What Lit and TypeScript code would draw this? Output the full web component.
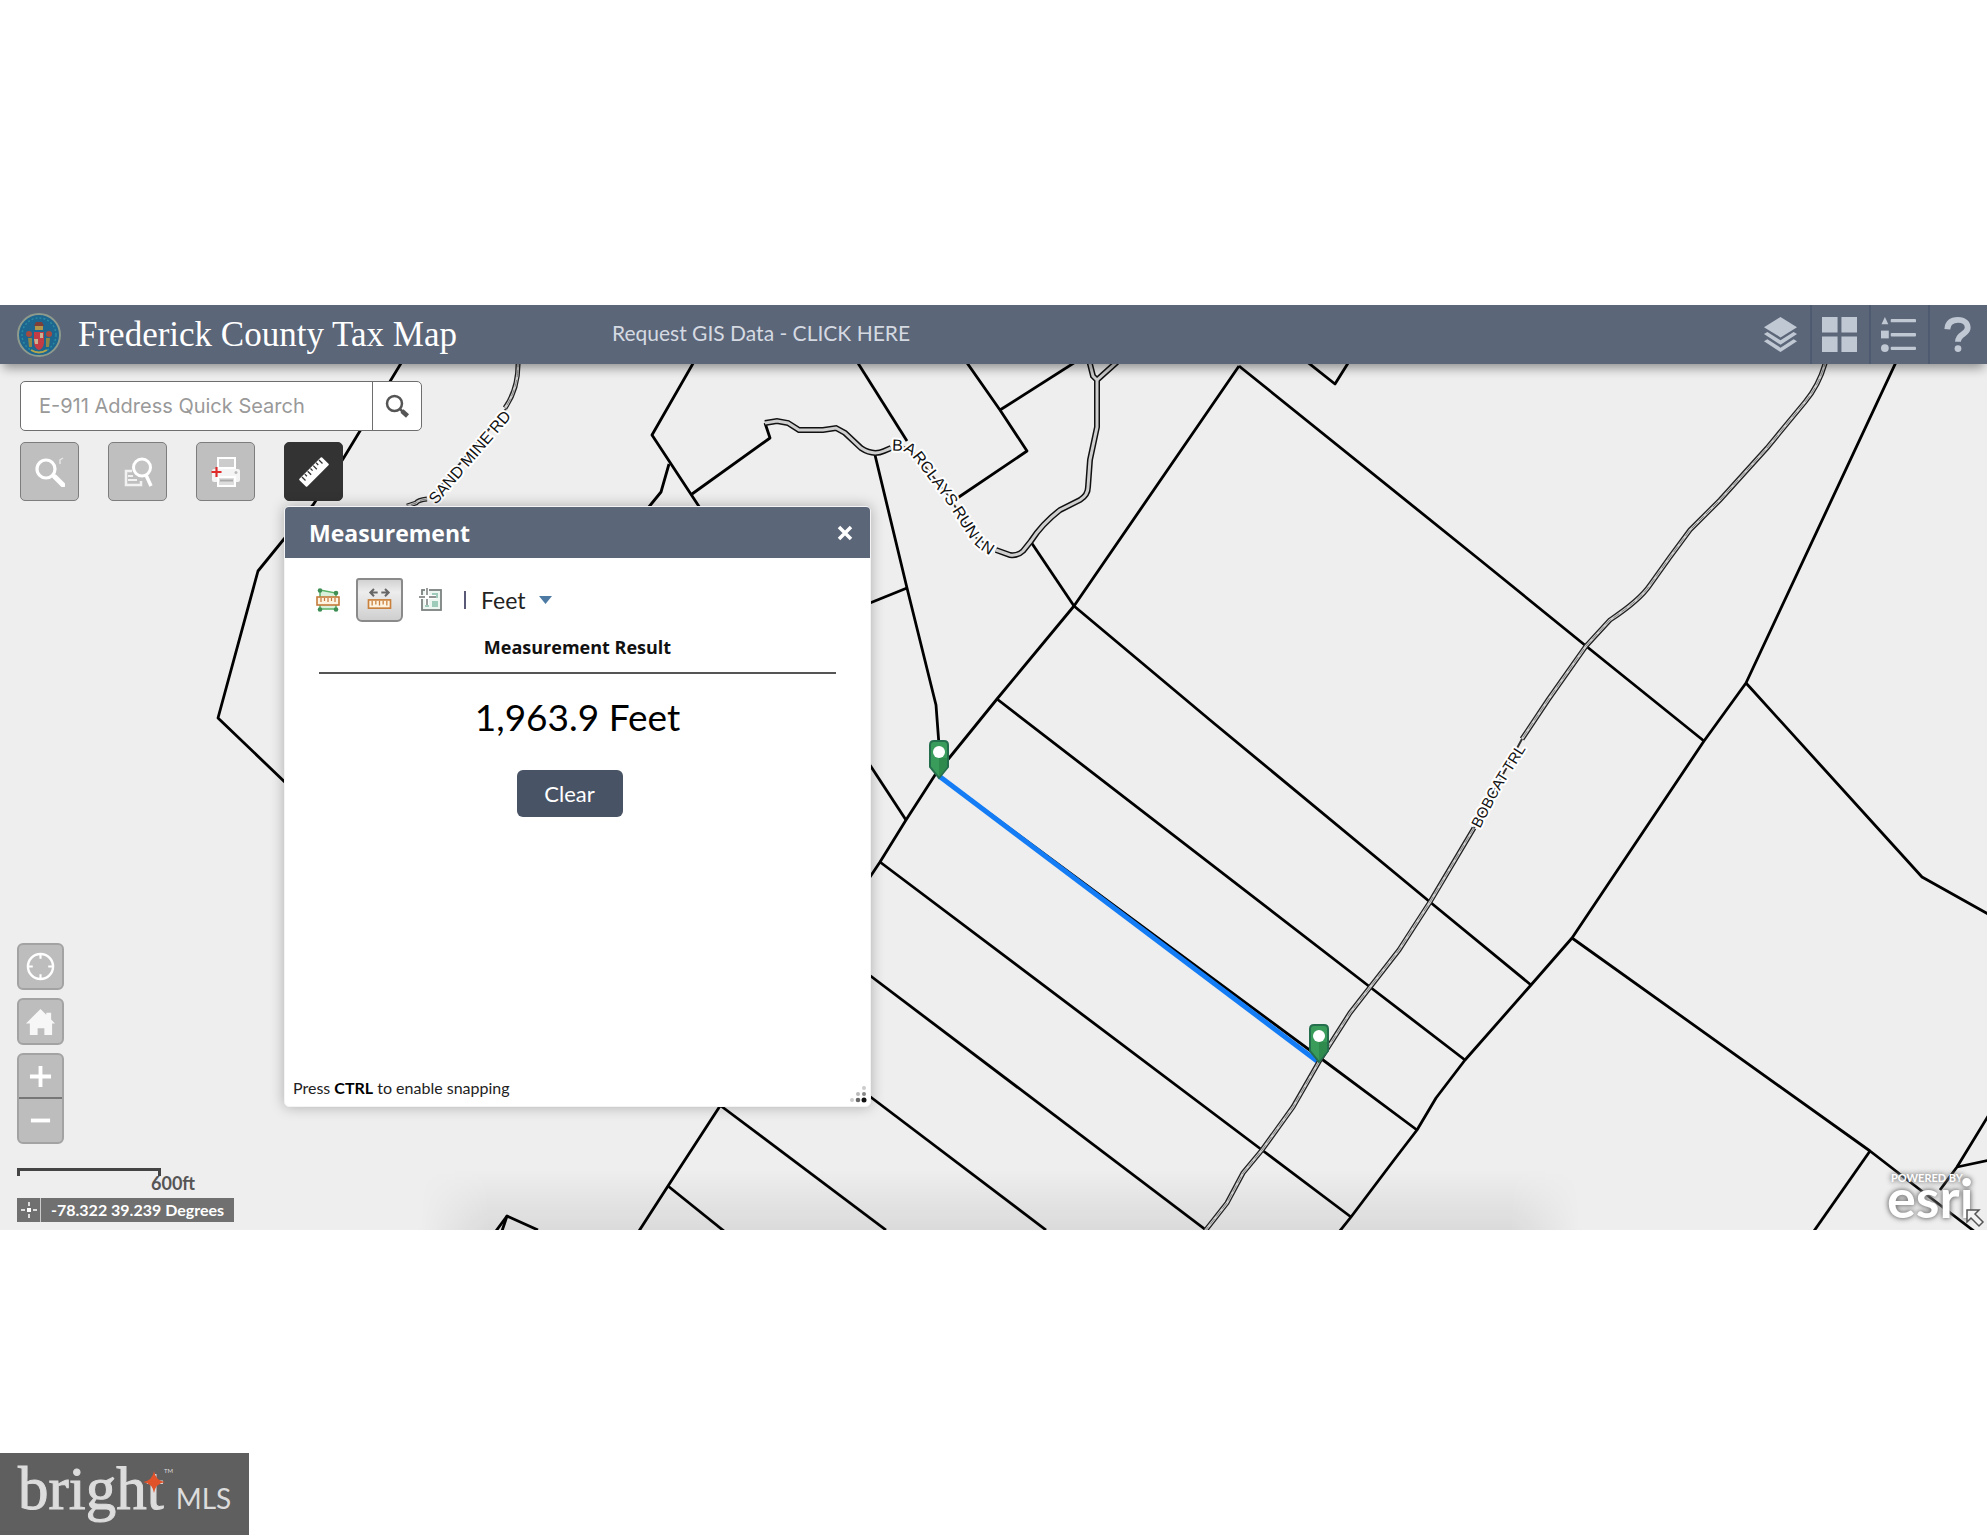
import { LitElement, html, css, svg } from "lit";
import { customElement } from "lit/decorators.js";

/* Parcel boundaries, as polylines in map units. */
const PARCELS: string[] = [
  "403,360 343,459 313,505 284,539 258,571 218,718 290,787",
  "695,360 652,435 700,508",
  "669,464 661,492 648,508",
  "692,494 770,438 765,423",
  "856,360 907,441",
  "965,360 1000,410 1027,451 956,499",
  "1000,410 1077,361",
  "875,455 907,588 936,705 939,745",
  "907,588 865,605",
  "1031,542 1074,606",
  "1239,366 1074,606 997,699 950,757 935,775 906,820 880,862 864,886",
  "864,756 906,820",
  "880,862 1262,1150 1351,1217",
  "864,971 1206,1230",
  "864,1092 1046,1230",
  "721,1106 886,1230",
  "720,1106 668,1186 639,1231",
  "668,1186 724,1231",
  "496,1231 507,1216 538,1230",
  "507,1216 502,1231",
  "939,776 1319,1057 1417,1130",
  "997,699 1370,987 1465,1060",
  "1074,606 1210,720 1430,902 1531,985",
  "1239,366 1480,560 1586,646 1704,741",
  "1897,360 1746,683 1704,741 1572,938 1531,985 1465,1060 1436,1098 1417,1130 1394,1160 1351,1217 1339,1232",
  "1746,683 1922,877 1990,915",
  "1572,938 1870,1151 1923,1192 1974,1231",
  "1870,1151 1814,1231",
  "1990,1113 1957,1167 1940,1190",
  "1957,1167 1990,1160",
  "1306,361 1335,384 1350,360",
];

const LANES: string[] = [
  "M765 423 L777 421 L788 423 L799 430 L823 430 L836 428 L845 433 L861 448 Q873 456 884 451 L891 448",
  "M996 550 L1010 555 Q1018 556 1023 551 L1031 541 Q1042 524 1060 510 L1080 500 Q1088 495 1088 487 L1090 460 L1097 427 L1097 380 L1093 376 L1089 360",
  "M1097 380 L1117 362",
];

const TRAILS: string[] = [
  "M518 360 Q519 388 505 408",
  "M427 499 Q418 500 416 503 L407 506",
  "M1826 360 Q1820 384 1805 402 L1767 448 L1720 500 L1690 530 L1670 557 L1650 585 Q1640 600 1610 620 L1586 646 L1548 700 L1522 739",
  "M1474 828 L1430 902 L1399 950 L1350 1013 L1320 1060 L1293 1107 L1262 1150 L1243 1173 L1227 1203 L1205 1231",
];

/* Road centre lines that show between the words of a label. */
const UNDER_LABELS: string[] = [
  "M430 499 L506 409",
  "M893 446 Q905 444 915 454 L947 494 L975 537 L994 549",
  "M1474 828 L1522 739",
];

const pin = (x: number, y: number) => svg`
  <g transform="translate(${x} ${y})">
    <path d="M-9 -33 Q-9 -37 -5 -37 H5 Q9 -37 9 -33 V-11 L0 0 L-9 -11 Z" fill="#3a9c5b" stroke="#256e4d" stroke-width="2"/>
    <path d="M0 -20 H8 V-11 L0 -1 Z" fill="#2f8a4e"/>
    <circle cx="0" cy="-26" r="6" fill="#fff"/>
  </g>`;

@customElement("tax-map")
export class TaxMap extends LitElement {
  static styles = css`
    :host { display: block; position: absolute; inset: 0; }
    svg { display: block; width: 100%; height: 100%; }
    .parcel { fill: none; stroke: #000; stroke-width: 2.8; stroke-linejoin: round; }
    .casing { fill: none; stroke: #111; stroke-width: 6; }
    .lane { fill: none; stroke: #cfcfcf; stroke-width: 3; }
    .casing.thin { stroke: #222; stroke-width: 5; }
    .lane.thin { stroke: #d0d0d0; stroke-width: 2.4; }
    .center { fill: none; stroke: #888; stroke-width: 1; stroke-dasharray: 7 3; }
    .under { fill: none; stroke: #333; stroke-width: 2; }
    .road { font: 16px "Liberation Sans", Arial, sans-serif; fill: #111; stroke: #fff; stroke-width: 4; stroke-linejoin: round; paint-order: stroke; }
    .road.small { font-size: 15px; }
    .measure { fill: none; stroke: #147df5; stroke-width: 5; }
  `;
  render() {
    return html`
      <svg viewBox="0 364 1987 866" preserveAspectRatio="xMidYMid slice" role="img" aria-label="Parcel map">
        <defs>
          <linearGradient id="fade" x1="0" y1="0" x2="0" y2="1">
            <stop offset="0" stop-color="#000" stop-opacity="0"/>
            <stop offset="1" stop-color="#000" stop-opacity=".08"/>
          </linearGradient>
          <linearGradient id="sides">
            <stop offset="0" stop-color="#000"/>
            <stop offset=".06" stop-color="#fff"/>
            <stop offset=".94" stop-color="#fff"/>
            <stop offset="1" stop-color="#000"/>
          </linearGradient>
          <mask id="edge"><rect x="420" y="1170" width="1160" height="60" fill="url(#sides)"/></mask>
          <path id="sand" d="M436 505 L514 414"/>
          <path id="barclays" d="M892 451 Q905 449 913 458 L943 497 L971 540 Q980 552 1000 560"/>
          <path id="bobcat" d="M1480 829 Q1495 799 1505 782 L1534 736"/>
        </defs>
        <rect x="0" y="0" width="1987" height="1600" fill="#eee"/>
        <rect x="420" y="1170" width="1160" height="60" fill="url(#fade)" mask="url(#edge)"/>
        ${PARCELS.map((p) => svg`<polyline class="parcel" points=${p}/>`)}
        <path class="measure" d="M939 776 L1317 1061"/>
        ${LANES.map((d) => svg`<path class="casing" d=${d}/>`)}
        ${LANES.map((d) => svg`<path class="lane" d=${d}/>`)}
        ${TRAILS.map((d) => svg`<path class="casing thin" d=${d}/><path class="lane thin" d=${d}/><path class="center" d=${d}/>`)}
        ${UNDER_LABELS.map((d) => svg`<path class="under" d=${d}/>`)}
        <text class="road"><textPath href="#sand">SAND MINE RD</textPath></text>
        <text class="road"><textPath href="#barclays">BARCLAYS RUN LN</textPath></text>
        <text class="road small"><textPath href="#bobcat">BOBCAT TRL</textPath></text>
        ${pin(939, 778)}${pin(1319, 1062)}
      </svg>`;
  }
}

const seal = html`<svg class="seal" viewBox="0 0 44 44" aria-hidden="true">
  <circle cx="22" cy="22" r="21" fill="#1c6690" stroke="#8d9a8c" stroke-width="2"/>
  <circle cx="22" cy="22" r="17" fill="none" stroke="#2a8aa0" stroke-width="1.500" stroke-dasharray="2 2"/>
  <path d="M17 13 l2 -4 h6 l2 4 z" fill="#7c3f3a"/>
  <path d="M18 13 h8 v4 h-8 z" fill="#b0964c"/>
  <circle cx="12" cy="21" r="3" fill="#a84a3e"/><circle cx="32" cy="21" r="3" fill="#a84a3e"/>
  <path d="M11 25 h4 v9 h-3 z M29 25 h4 l-1 9 h-3 z" fill="#8c8648"/>
  <path d="M17 19 h10 v11 q-1 6 -5 7 q-4 -1 -5 -7 z" fill="#c23b45"/>
  <path d="M17 26 h4 v5 h-3 z M23 20 h3 v5 h-3 z" fill="#c9b090"/>
  <path d="M14 37 q8 5 16 0" fill="none" stroke="#b5a54a" stroke-width="2"/>
</svg>`;

const layersIcon = html`<svg viewBox="0 0 36 36" aria-hidden="true"><g fill="currentColor">
  <path d="M18 0 L35 10.500 L18 21 L1 10.500 Z"/>
  <path d="M1 17.500 L4.500 15.500 L18 24 L31.500 15.500 L35 17.500 L18 28.500 Z"/>
  <path d="M1 25 L4.500 23 L18 31.500 L31.500 23 L35 25 L18 36 Z"/></g></svg>`;
const gridIcon = html`<svg viewBox="0 0 36 36" aria-hidden="true"><path fill="currentColor" d="M0 0h16v16H0zM20 0h16v16H20zM0 20h16v16H0zM20 20h16v16H20z"/></svg>`;
const listIcon = html`<svg viewBox="0 0 36 36" aria-hidden="true"><g fill="currentColor">
  <path d="M4 0 L7.500 7.500 H.5 Z"/><path d="M0 14h8v8H0z"/><circle cx="4" cy="32" r="4"/>
  <rect x="10" y="2" width="26" height="3.500" rx="1"/><rect x="10" y="16.500" width="26" height="3.500" rx="1"/><rect x="10" y="30.500" width="26" height="3.500" rx="1"/></g></svg>`;
const helpIcon = html`<svg viewBox="0 0 36 36" aria-hidden="true"><path d="M7.500 12.500 C8 6 12 3 18.500 3 C25 3 28.500 6.500 28.500 11 C28.500 18 18.500 17 18.500 25.500" fill="none" stroke="currentColor" stroke-width="6"/><circle cx="18.500" cy="32.500" r="3.500" fill="currentColor"/></svg>`;

const findIcon = html`<svg viewBox="0 0 24 24" aria-hidden="true"><circle cx="9.500" cy="9.500" r="7.500" fill="none" stroke="#555" stroke-width="2.500"/><path d="M15 15 L17.500 17.500" stroke="#555" stroke-width="2.500"/><path d="M17 17 L22.500 22" stroke="#555" stroke-width="4.500"/></svg>`;

const toolIcons = [
  {
    label: "Parcel search",
    icon: html`<svg viewBox="0 0 30 30" aria-hidden="true"><circle cx="11" cy="12" r="9" fill="none" stroke="#fff" stroke-width="3.200"/><path d="M17 18 L20 21" stroke="#fff" stroke-width="3"/><path d="M20 20 L28 28" stroke="#fff" stroke-width="5" stroke-linecap="round"/><path d="M25 7 V3 L28 1" fill="none" stroke="#e6e6e6" stroke-width="1.500"/></svg>`,
  },
  {
    label: "Query",
    icon: html`<svg viewBox="0 0 30 30" aria-hidden="true"><path d="M9 14 H3 V28 H18 V24" fill="none" stroke="#f2f2f2" stroke-width="2.500"/><path d="M5 19h5M5 23h9" stroke="#f2f2f2" stroke-width="2"/><circle cx="19" cy="10.500" r="8.500" fill="#c4c4c4" stroke="#fff" stroke-width="3"/><path d="M23 18 L28 29" stroke="#fff" stroke-width="3.500"/></svg>`,
  },
  {
    label: "Print",
    icon: html`<svg viewBox="0 0 30 30" aria-hidden="true"><path d="M7 1 h17 v10 h-17 z" fill="#ccc" stroke="#fff" stroke-width="2"/><rect x="1" y="12" width="28" height="13" rx="2" fill="#f4f4f4"/><rect x="7" y="20" width="17" height="9" fill="#ddd" stroke="#fff" stroke-width="2"/><path d="M9 23.500h13" stroke="#aaa" stroke-width="2"/><circle cx="25" cy="15.500" r="1.500" fill="#bbb"/><path d="M5.500 10v10M.5 15h10" stroke="#e02b2b" stroke-width="2.200"/></svg>`,
  },
  {
    label: "Measurement",
    active: true,
    icon: html`<svg viewBox="0 0 30 30" aria-hidden="true"><g transform="rotate(-45 15 15)"><rect x="-1" y="9.500" width="32" height="11" rx="1" fill="#fff"/><path d="M3 10v5M7 10v3M11 10v5M15 10v3M19 10v5M23 10v3M27 10v5" stroke="#333" stroke-width="1.300"/></g></svg>`,
  },
];

const areaIcon = html`<svg viewBox="0 0 24 24" aria-hidden="true"><path d="M4 2 L20 5 V21 H4 Z" fill="#d9f0da" stroke="#58b368" stroke-width="1.500"/><rect x="1" y="9" width="22" height="8" fill="#fff3e2" stroke="#c47a3a" stroke-width="1.600"/><path d="M5 10v4M8.500 10v3M12 10v4M15.500 10v3M19 10v4" stroke="#c47a3a" stroke-width="1.200"/><g fill="#3f8f55"><circle cx="4" cy="2.500" r="2.300"/><circle cx="20" cy="5" r="2.300"/><circle cx="4" cy="21.500" r="2.300"/><circle cx="20" cy="21.500" r="2.300"/></g></svg>`;
const distanceIcon = html`<svg viewBox="0 0 24 24" aria-hidden="true"><path d="M2 5 H10 M14 5 H22 M6 1 L2 5 L6 9 M18 1 L22 5 L18 9" fill="none" stroke="#666" stroke-width="2.200"/><rect x="0" y="13" width="24" height="9" fill="#fff3e2" stroke="#c9803c" stroke-width="1.800"/><path d="M4 14v5M8 14v4M12 14v5M16 14v4M20 14v5" stroke="#c9803c" stroke-width="1.400"/></svg>`;
const locationIcon = html`<svg viewBox="0 0 24 24" aria-hidden="true"><rect x="3" y="2" width="19" height="20" fill="#eef6f2" stroke="#7a827f" stroke-width="1.800"/><path d="M13 5h6v5h-6zM13 13h6v6h-6zM6 13h4v6h-4z" fill="#9fcbbb"/><path d="M8 0v17M0 9h17" stroke="#fff" stroke-width="4"/><path d="M8 0v7M8 11v6M0 9h6M10 9h7" stroke="#6d7472" stroke-width="1.400"/></svg>`;

@customElement("measure-panel")
export class MeasurePanel extends LitElement {
  static styles = css`
    :host { display: flex; flex-direction: column; box-sizing: border-box; background: #fff; border: 1px solid #f4f4f6; border-radius: 5px; box-shadow: 0 0 14px rgba(0, 0, 0, .28); font-family: Lato, sans-serif; color: #111; }
    * { box-sizing: border-box; }
    button { font: inherit; padding: 0; border: 0; background: none; }
    .bar { display: flex; align-items: center; justify-content: space-between; height: 51px; padding: 0 18px 0 24px; background: #5b6678; color: #fff; border-radius: 4px 4px 0 0; }
    .title { margin: 0; font: bold 23px/30px "Open Sans", sans-serif; }
    .close { width: 14px; height: 14px; color: #fff; }
    svg { display: block; width: 100%; height: 100%; overflow: visible; }
    .tools { display: flex; align-items: center; height: 44px; margin: 20px 0 0 31px; }
    .icon { width: 24px; height: 24px; }
    .picked { width: 47px; height: 44px; padding: 8px 10px 10px; margin: 0 16px; background: linear-gradient(#d2d2d2, #ededed 30%, #cfcfcf); border: 2px solid #8a8a8a; border-radius: 3px 3px 6px 6px; }
    .sep { width: 2px; height: 18px; margin: 0 15px 0 21px; background: #5a5a78; }
    .units { position: relative; display: flex; align-items: center; }
    select { appearance: none; border: 0; margin: 0; padding: 0 26px 0 0; background: none; color: #222; font: 23px/30px Lato, sans-serif; }
    .caret { position: absolute; right: 0; top: 11px; width: 13px; height: 8px; pointer-events: none; }
    .heading { margin: 13px 34px 0; padding-bottom: 13px; border-bottom: 2px solid #555; text-align: center; font: bold 18px/24px "Open Sans", sans-serif; }
    .value { margin: 21px 0 0; text-align: center; font-size: 37px; line-height: 44px; color: #000; }
    .clear { align-self: center; width: 106px; height: 47px; margin: 31px 16px 0 0; border-radius: 6px; background: #485365; color: #fff; font-size: 22px; }
    .foot { display: flex; align-items: flex-end; justify-content: space-between; margin-top: auto; padding: 0 4px 4px 8px; font-size: 16px; line-height: 20px; color: #222; }
    .foot p { margin: 0 0 4px; }
    b { color: #000; }
    .grip { width: 16px; height: 16px; }
  `;
  render() {
    return html`
      <div class="bar">
        <h2 class="title">Measurement</h2>
        <button class="close" aria-label="Close"><svg viewBox="0 0 14 14"><path d="M1 1 L13 13 M13 1 L1 13" stroke="currentColor" stroke-width="3.500"/></svg></button>
      </div>
      <div class="tools">
        <button class="icon" aria-label="Area">${areaIcon}</button>
        <button class="picked" aria-label="Distance" aria-pressed="true">${distanceIcon}</button>
        <button class="icon" aria-label="Location">${locationIcon}</button>
        <span class="sep"></span>
        <span class="units">
          <select aria-label="Unit"><option>Feet</option></select>
          <svg class="caret" viewBox="0 0 15 9" aria-hidden="true"><path d="M0 0H15L7.500 9Z" fill="#4d7aa3"/></svg>
        </span>
      </div>
      <h3 class="heading">Measurement Result</h3>
      <p class="value">1,963.9 Feet</p>
      <button class="clear">Clear</button>
      <div class="foot">
        <p>Press <b>CTRL</b> to enable snapping</p>
        <svg class="grip" viewBox="0 0 16 16" aria-hidden="true"><circle cx="14" cy="2" r="2" fill="#ccc"/><circle cx="8" cy="8" r="2" fill="#bbb"/><circle cx="14" cy="8" r="2" fill="#888"/><circle cx="2" cy="14" r="2" fill="#ccc"/><circle cx="8" cy="14" r="2.300" fill="#666"/><circle cx="14" cy="14" r="2.500" fill="#111"/></svg>
      </div>`;
  }
}

@customElement("app-root")
export class AppRoot extends LitElement {
  static styles = css`
    :host { display: flex; flex-direction: column; box-sizing: border-box; min-height: 100vh; padding-top: 305px; background: #fff; font-family: Lato, sans-serif; }
    * { box-sizing: border-box; }
    button { font: inherit; color: inherit; padding: 0; border: 0; background: none; }
    svg { display: block; }

    .top { position: relative; z-index: 1; display: flex; align-items: center; height: 59px; background: #5b6678; box-shadow: 0 7px 10px -3px rgba(0, 0, 0, .4); }
    .seal { width: 44px; height: 44px; margin: 0 17px; }
    .name { margin: 0; width: 534px; color: #fff; font: 35px/44px "Liberation Serif", "Times New Roman", serif; }
    .request { color: #d5dae2; font-size: 21px; line-height: 28px; text-decoration: none; padding-bottom: 3px; }
    .widgets { display: flex; align-self: stretch; margin-left: auto; color: #c0c8d4; }
    .widgets button { display: grid; place-items: center; width: 59px; padding-right: 2px; border-left: 2px solid #4e5a70; }
    .widgets button:first-child { border-color: transparent; }
    .widgets svg { width: 35px; height: 35px; }

    .stage { position: relative; flex: 1; min-height: 800px; overflow: hidden; background: #eee; }
    .controls { position: relative; display: flex; flex-direction: column; gap: 11px; width: max-content; padding: 17px 20px; }
    .search { display: flex; width: 402px; height: 50px; background: #fff; border: 1px solid #6e6e6e; border-radius: 5px; }
    .search input { flex: 1; min-width: 0; border: 0; border-right: 1px solid #6e6e6e; padding: 0 18px; background: none; font: 20px Inter, sans-serif; color: #333; }
    .search input::placeholder { color: #999; opacity: 1; }
    .search button { display: grid; place-items: center; width: 48px; }
    .search svg { width: 24px; height: 24px; }
    .tools { display: flex; gap: 29px; }
    .tools button { display: grid; place-items: center; width: 59px; height: 59px; background: #bfbfbf; border: 1px solid #7d7d7d; border-radius: 5px; }
    .tools button.on { background: #333; border-color: #333; }
    .tools svg { width: 30px; height: 30px; }
    .panel { position: absolute; left: 284px; top: 142px; width: 587px; height: 601px; }

    .corner { position: absolute; left: 17px; bottom: 8px; display: flex; flex-direction: column; align-items: flex-start; gap: 8px; }
    .pad { display: grid; place-items: center; width: 47px; height: 47px; background: #bdbdbd; border: 2px solid #a3a3a3; border-radius: 6px; }
    .pad svg { width: 29px; height: 29px; }
    .zoom { display: flex; flex-direction: column; width: 47px; background: #bdbdbd; border: 2px solid #a3a3a3; border-radius: 6px; margin-bottom: 16px; }
    .zoom button { display: grid; place-items: center; height: 43px; }
    .zoom button:first-child { height: 44px; border-bottom: 2px solid #777; }
    .zoom svg { width: 23px; height: 23px; }
    .bar { width: 144px; height: 8px; border: 3px solid #444; border-bottom: 0; }
    .feet { display: block; padding-left: 134px; font-weight: bold; font-size: 18px; line-height: 14px; color: #555; }
    .coords { display: flex; height: 24px; background: #707070; color: #fff; font-weight: bold; font-size: 16px; line-height: 24px; }
    .coords button { display: grid; place-items: center; width: 24px; border-right: 1px solid #ccc; }
    .coords svg { width: 18px; height: 18px; }
    .coords span { padding: 0 10px; }

    .esri { position: absolute; right: 10px; bottom: 18px; width: 90px; color: #fff; font-weight: bold; text-decoration: none; text-shadow: 0 0 4px #777, 0 0 6px #888; }
    .powered { display: block; padding-left: 4px; font-size: 11px; line-height: 12px; }
    .mark { display: block; font-size: 54px; line-height: 28px; }
    .overview { position: absolute; right: 2px; bottom: 2px; width: 20px; height: 20px; }
    .overview svg { width: 20px; height: 20px; }

    .credit { display: flex; align-items: baseline; align-self: flex-start; margin-top: 223px; width: 249px; height: 82px; padding-left: 18px; background: #5f5f5f; color: #dcdcdc; position: relative; }
    .bright { font: 61px/72px "Liberation Serif", serif; -webkit-text-stroke: 1px #dcdcdc; }
    .star { position: absolute; left: 143px; top: 18px; width: 22px; height: 22px; }
    .tm { position: absolute; left: 164px; top: 14px; font-size: 6px; line-height: 8px; }
    .mls { margin-left: 12px; font-size: 28px; }
  `;
  render() {
    return html`
      <header class="top">
        ${seal}
        <h1 class="name">Frederick County Tax Map</h1>
        <a class="request" href="#request">Request GIS Data - CLICK HERE</a>
        <nav class="widgets" aria-label="Map widgets">
          <button aria-label="Layers">${layersIcon}</button>
          <button aria-label="Basemaps">${gridIcon}</button>
          <button aria-label="Legend">${listIcon}</button>
          <button aria-label="Help">${helpIcon}</button>
        </nav>
      </header>
      <main class="stage">
        <tax-map></tax-map>
        <div class="controls">
          <form class="search" role="search">
            <input type="text" aria-label="E-911 Address Quick Search" placeholder="E-911 Address Quick Search">
            <button type="button" aria-label="Search">${findIcon}</button>
          </form>
          <div class="tools">
            ${toolIcons.map((t) => html`<button class=${t.active ? "on" : ""} aria-label=${t.label}>${t.icon}</button>`)}
          </div>
        </div>
        <div class="corner">
          <button class="pad" aria-label="My location"><svg viewBox="0 0 30 30"><circle cx="15" cy="15" r="13" fill="none" stroke="#fff" stroke-width="2.500"/><path d="M15 2v5M15 23v5M2 15h5M23 15h5" stroke="#fff" stroke-width="2.200"/></svg></button>
          <button class="pad" aria-label="Home"><svg viewBox="0 0 30 30"><path d="M15 2 L21 8 V6 H26 V13 L30 17 H27 V29 H19 V22 H12 V29 H4 V17 H0 Z" fill="#f7f7f7"/></svg></button>
          <div class="zoom">
            <button aria-label="Zoom in"><svg viewBox="0 0 24 24"><path d="M12 1v22M1 12h22" stroke="#fff" stroke-width="4"/></svg></button>
            <button aria-label="Zoom out"><svg viewBox="0 0 24 24"><path d="M2 12h20" stroke="#fff" stroke-width="4"/></svg></button>
          </div>
          <div class="scale"><div class="bar"></div><span class="feet">600ft</span></div>
          <div class="coords">
            <button aria-label="Pick coordinate"><svg viewBox="0 0 18 18"><path d="M9 1v4M9 13v4M1 9h4M13 9h4" stroke="#fff" stroke-width="1.500"/><rect x="7" y="7" width="4" height="4" fill="#fff"/></svg></button>
            <span>-78.322 39.239 Degrees</span>
          </div>
        </div>
        <a class="esri" href="#esri"><span class="powered">POWERED BY</span><span class="mark">esri</span></a>
        <button class="overview" aria-label="Show overview map"><svg viewBox="0 0 20 20"><path d="M2 2 H14 L10 6 L18 14 L14 18 L6 10 L2 14 Z" fill="#f4f4f4" stroke="#555" stroke-width="1.500"/></svg></button>
        <measure-panel class="panel"></measure-panel>
      </main>
      <footer class="credit">
        <span class="bright">bright</span>
        <svg class="star" viewBox="0 0 22 22" aria-hidden="true"><path d="M11 0 Q12.500 9.500 22 11 Q12.500 12.500 11 22 Q9.500 12.500 0 11 Q9.500 9.500 11 0Z" fill="#e0522a"/></svg>
        <span class="tm">TM</span>
        <span class="mls">MLS</span>
      </footer>`;
  }
}
